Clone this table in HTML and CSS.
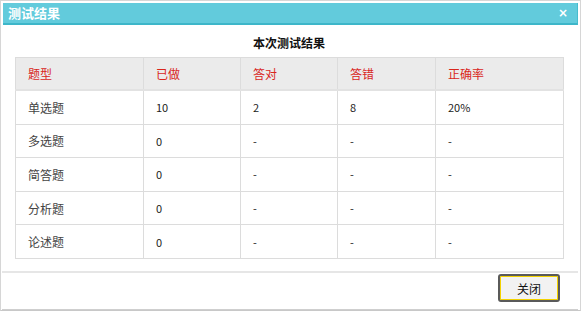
FILE: index.html
```html
<!DOCTYPE html>
<html lang="zh">
<head>
<meta charset="utf-8">
<title>测试结果</title>
<link rel="stylesheet" href="styles.css">
</head>
<body>
<div class="dialog">
  <div class="titlebar">
    <span class="title">测试结果</span>
    <span class="close">×</span>
  </div>
  <div class="content">
    <div class="caption">本次测试结果</div>
    <table class="result">
      <colgroup>
        <col class="c1"><col class="c2"><col class="c3"><col class="c4"><col class="c5">
      </colgroup>
      <thead>
        <tr><th>题型</th><th>已做</th><th>答对</th><th>答错</th><th>正确率</th></tr>
      </thead>
      <tbody>
        <tr><td class="name">单选题</td><td>10</td><td>2</td><td>8</td><td>20%</td></tr>
        <tr><td class="name">多选题</td><td>0</td><td>-</td><td>-</td><td>-</td></tr>
        <tr><td class="name">简答题</td><td>0</td><td>-</td><td>-</td><td>-</td></tr>
        <tr><td class="name">分析题</td><td>0</td><td>-</td><td>-</td><td>-</td></tr>
        <tr><td class="name">论述题</td><td>0</td><td>-</td><td>-</td><td>-</td></tr>
      </tbody>
    </table>
  </div>
  <div class="footer">
    <button class="btn">关闭</button>
  </div>
</div>
</body>
</html>
```
FILE: styles.css
```css
html, body {
  margin: 0;
  padding: 0;
  background: #fff;
}
body {
  font-family: "Liberation Sans", "Noto Sans CJK SC", sans-serif;
  font-size: 12px;
  color: #333;
}
.dialog {
  width: 576px;
  height: 307px;
  border: 1px solid #d6d6d6;
  border-bottom-color: #c8c8c8;
  padding: 2px 2px 0 1px;
  display: flex;
  flex-direction: column;
}
.titlebar {
  height: 20px;
  margin-left: 1px;
  background: #62cbdc;
  border-bottom: 2px solid #3db6c9;
  border-right: 1px solid #47bccd;
  display: flex;
  align-items: center;
  justify-content: space-between;
  padding: 0 9px 0 5px;
}
.title {
  color: #fff;
  font-weight: bold;
  font-size: 13px;
  font-family: "Noto Sans CJK SC", sans-serif;
  line-height: 20px;
}
.close {
  color: #fff;
  font-weight: bold;
  font-size: 12px;
  line-height: 20px;
  font-family: "DejaVu Sans", sans-serif;
}
.content {
  flex: 1;
  padding: 9px 15px 0 13px;
  border-bottom: 2px solid #e6e6e6;
}
.caption {
  text-align: center;
  font-weight: bold;
  color: #111;
  font-size: 12px;
  line-height: 18px;
  margin-bottom: 5px;
  font-family: "Noto Sans CJK SC", sans-serif;
}
.result {
  width: 548px;
  border-collapse: collapse;
  table-layout: fixed;
}
.c1 { width: 128px; }
.c2 { width: 97px; }
.c3 { width: 97px; }
.c4 { width: 98px; }
.c5 { width: 128px; }
.result th, .result td {
  border: 1px solid #dcdcdc;
  text-align: left;
  padding: 0 0 0 12px;
  font-family: "Noto Sans CJK SC", sans-serif;
}
.result th {
  background: #ebebeb;
  color: #d9261c;
  font-weight: normal;
  font-size: 12px;
  height: 31px;
  border-bottom: 2px solid #e2e2e2;
}
.result td {
  height: 32.6px;
  font-size: 11px;
  color: #222;
}
.result td.name {
  font-size: 12px;
  color: #444;
}
.footer {
  height: 35px;
  display: flex;
  justify-content: flex-end;
  align-items: flex-start;
  padding: 1px 18px 0 0;
  border-bottom: 1px solid #cfcfcf;
}
.btn {
  width: 62px;
  height: 28px;
  background: #f2f2f2;
  border: 2px solid #5a5a5a;
  border-radius: 3px;
  box-shadow: inset 0 0 0 1px #f3d200;
  font-family: "Noto Sans CJK SC", sans-serif;
  font-size: 12px;
  color: #111;
  padding: 0;
}
```
